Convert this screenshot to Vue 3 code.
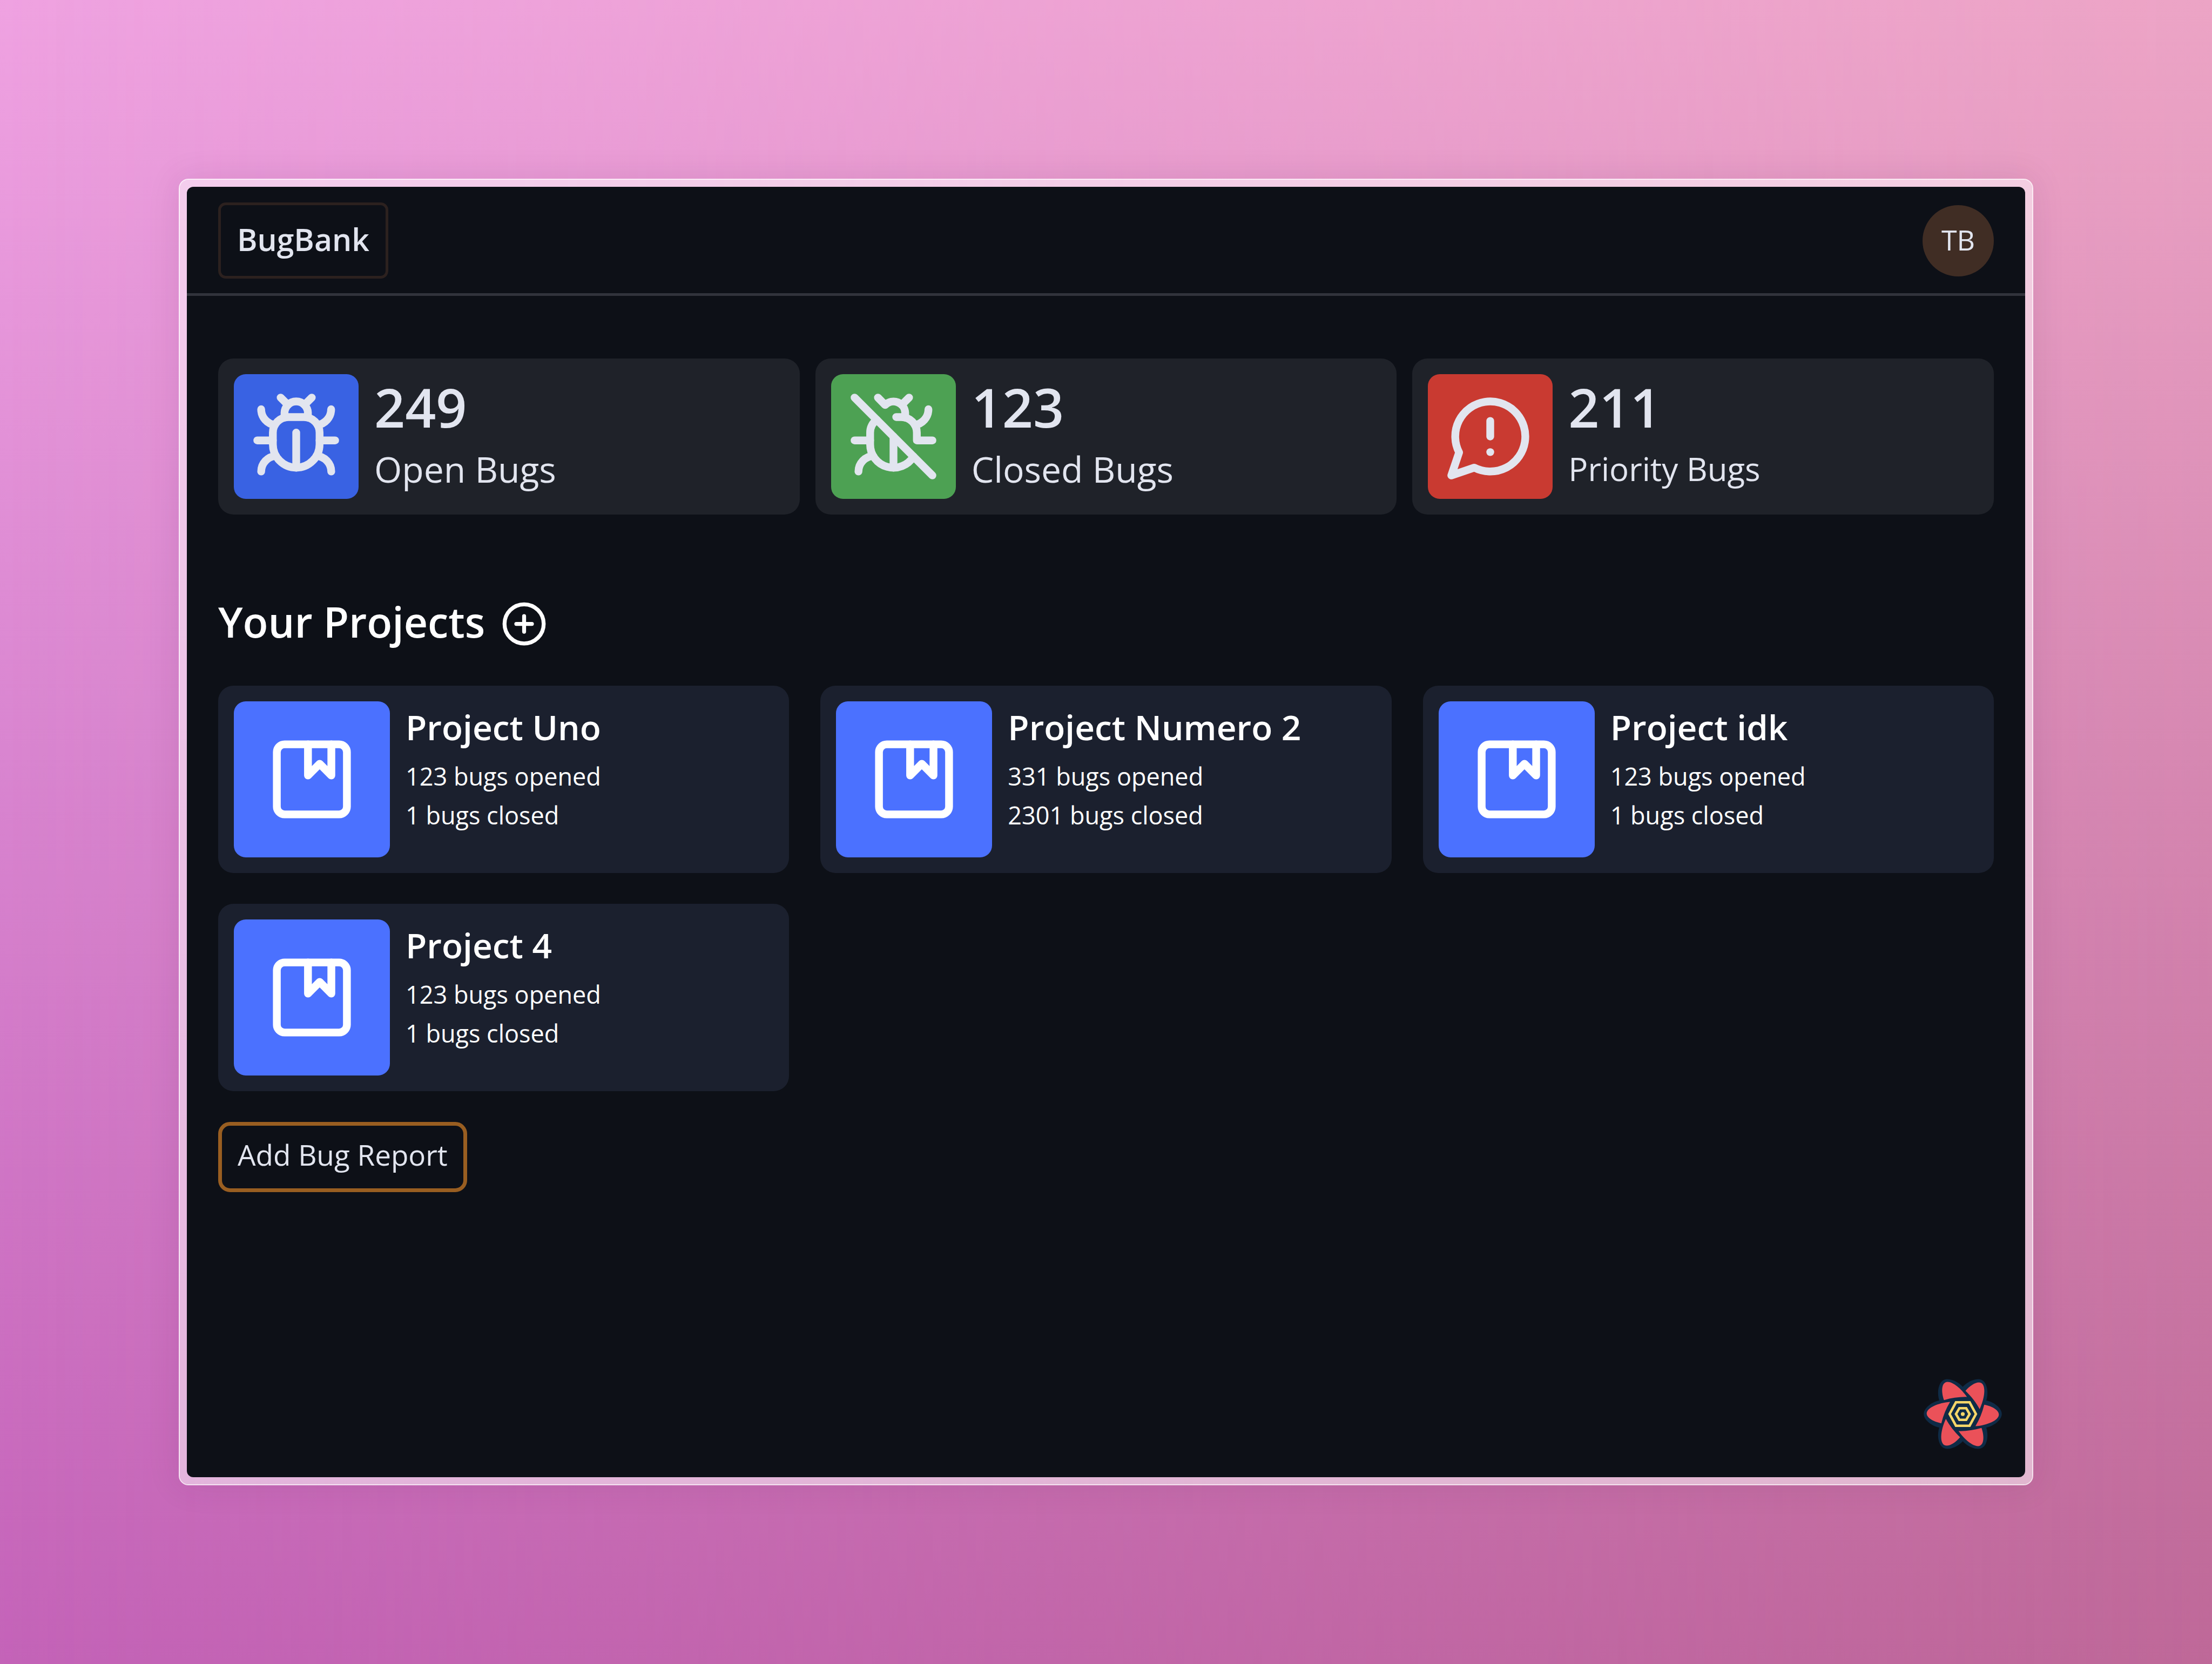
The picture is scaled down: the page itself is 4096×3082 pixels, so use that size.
<script setup>
const stats = [
  { value: '249', label: 'Open Bugs', tone: 'blue', icon: 'bug', size: 'large' },
  { value: '123', label: 'Closed Bugs', tone: 'green', icon: 'bug-off', size: 'large' },
  { value: '211', label: 'Priority Bugs', tone: 'red', icon: 'warning', size: 'small' },
]

const icons = {
  bug: [
    'm8 2 1.88 1.88',
    'M14.12 3.88 16 2',
    'M9 7.13v-1a3.003 3.003 0 1 1 6 0v1',
    'M12 20c-3.3 0-6-2.7-6-6v-3a4 4 0 0 1 4-4h4a4 4 0 0 1 4 4v3c0 3.3-2.7 6-6 6',
    'M12 20v-9',
    'M6.53 9C4.6 8.8 3 7.1 3 5',
    'M6 13H2',
    'M3 21c0-2.1 1.7-3.9 3.8-4',
    'M20.97 5c0 2.1-1.6 3.8-3.5 4',
    'M22 13h-4',
    'M17.2 17c2.1.1 3.8 1.9 3.8 4',
  ],
  'bug-off': [
    'M15 7.13V6a3 3 0 0 0-5.14-2.1L8 2',
    'M14.12 3.88 16 2',
    'M22 13h-4v-2a4 4 0 0 0-4-4h-1.3',
    'M20.97 5c0 2.1-1.6 3.8-3.5 4',
    'm2 2 20 20',
    'M7.7 7.7A4 4 0 0 0 6 11v3a6 6 0 0 0 11.13 3.13',
    'M12 20v-8',
    'M6 13H2',
    'M3 21c0-2.1 1.7-3.9 3.8-4',
  ],
  warning: ['M7.9 20A9 9 0 1 0 4 16.1L2 22Z', 'M12 8v4', 'M12 16h.01'],
}

const projects = [
  { name: 'Project Uno', opened: 123, closed: 1 },
  { name: 'Project Numero 2', opened: 331, closed: 2301 },
  { name: 'Project idk', opened: 123, closed: 1 },
  { name: 'Project 4', opened: 123, closed: 1 },
]

const petals = [0, 60, 120, 180, 240, 300]
</script>

<template>
  <div class="backdrop">
    <div class="frame">
      <div class="window">
        <header class="topbar">
          <a class="brand" href="#">BugBank</a>
          <button class="avatar" type="button" aria-label="Account">TB</button>
        </header>

        <main class="content">
          <section class="stats" aria-label="Bug totals">
            <article v-for="stat in stats" :key="stat.label" class="stat">
              <div class="stat-icon" :class="stat.tone">
                <svg class="icon" viewBox="0 0 24 24" aria-hidden="true">
                  <path v-for="d in icons[stat.icon]" :key="d" :d="d" />
                </svg>
              </div>
              <div class="stat-text">
                <p class="stat-value">{{ stat.value }}</p>
                <p class="stat-label" :class="stat.size">{{ stat.label }}</p>
              </div>
            </article>
          </section>

          <div class="heading">
            <h1>Your Projects</h1>
            <button class="add" type="button" aria-label="Add project">
              <svg viewBox="0 0 24 24" aria-hidden="true">
                <circle cx="12" cy="12" r="10" />
                <path d="M8 12h8M12 8v8" />
              </svg>
            </button>
          </div>

          <section class="projects" aria-label="Projects">
            <article v-for="project in projects" :key="project.name" class="project">
              <div class="project-icon">
                <svg class="icon" viewBox="0 0 24 24" aria-hidden="true">
                  <rect x="3" y="3" width="18" height="18" rx="2" />
                  <path d="M11 3v8l3-3 3 3V3" />
                </svg>
              </div>
              <div class="project-text">
                <h2>{{ project.name }}</h2>
                <p>{{ project.opened }} bugs opened</p>
                <p>{{ project.closed }} bugs closed</p>
              </div>
            </article>
          </section>

          <button class="report" type="button">Add Bug Report</button>
        </main>

        <button class="devtools" type="button" aria-label="Open query devtools">
          <svg viewBox="-80 -72 160 144" aria-hidden="true">
            <g class="petal-edge">
              <circle r="44" />
              <path v-for="a in petals" :key="a" :transform="`rotate(${a})`" d="M22 -27C50 -36 80 -16 80 0S50 36 22 27Z" />
            </g>
            <g class="petal">
              <path v-for="a in petals" :key="a" :transform="`rotate(${a})`" d="M44 -19C60 -16 74 -8 74 1C74 13 50 23 26 25C34 12 40 -3 44 -19Z" />
            </g>
            <path class="ring" d="M-14 -24H14L27 0L14 24H-14L-27 0Z" />
            <path class="ring" d="M-7 -12H7L14 0L7 12H-7L-14 0Z" />
            <circle class="dot" r="4" />
          </svg>
        </button>
      </div>
    </div>
  </div>
</template>

<style>
body {
  margin: 0;
}
</style>

<style scoped>
.backdrop {
  position: relative;
  box-sizing: border-box;
  display: flex;
  min-height: 100vh;
  padding: 331px;
  background: linear-gradient(180deg, #efa2e1 0%, #d985d0 45%, #c463b8 100%);
  font-family: "Open Sans", "Noto Sans", sans-serif;
  color: #e2e5ef;
}

.backdrop::before {
  content: "";
  position: absolute;
  inset: 0;
  background: linear-gradient(180deg, #eca4c5 0%, #d688b1 45%, #be6898 100%);
  mask-image: linear-gradient(90deg, transparent, #000);
}

.frame {
  position: relative;
  box-sizing: border-box;
  display: flex;
  flex: 1;
  padding: 13px;
  border: 2px solid rgba(255, 255, 255, 0.8);
  border-radius: 18px;
  background: rgba(255, 255, 255, 0.5);
  background-clip: padding-box;
  box-shadow: 0 0 60px rgba(90, 30, 90, 0.12);
}

.window {
  position: relative;
  flex: 1;
  border-radius: 12px;
  background: #0d1017;
}

.topbar {
  display: flex;
  align-items: center;
  justify-content: space-between;
  padding: 29px 58px 27px;
  border-bottom: 5px solid #31333c;
}

.brand {
  box-sizing: border-box;
  height: 141px;
  padding: 0 30px;
  border: 5px solid #2c211f;
  border-radius: 14px;
  font-size: 57px;
  font-weight: 600;
  line-height: 127px;
  color: inherit;
  text-decoration: none;
}

button {
  box-sizing: border-box;
  padding: 0;
  border: 0;
  background: none;
  font-family: inherit;
  color: inherit;
}

.avatar {
  width: 132px;
  height: 132px;
  padding-bottom: 5px;
  border-radius: 50%;
  background: #402d24;
  font-size: 52px;
  line-height: 127px;
}

.content {
  padding: 116px 58px 0;
}

.stats {
  display: grid;
  grid-template-columns: repeat(3, 1fr);
  gap: 29px;
}

.stat,
.project {
  display: flex;
  gap: 29px;
  padding: 29px;
  border-radius: 28px;
}

.stat {
  background: #1f2229;
}

.stat-icon,
.project-icon {
  display: flex;
  flex: none;
  align-items: center;
  justify-content: center;
  border-radius: 22px;
}

.stat-icon {
  width: 231px;
  height: 231px;
}

.blue {
  background: #3962e3;
}

.green {
  background: #4da153;
}

.red {
  background: #c93a31;
}

.icon {
  width: 173px;
  height: 173px;
}

svg {
  display: block;
}

.icon,
.add svg {
  fill: none;
  stroke: currentColor;
  stroke-width: 2;
  stroke-linecap: round;
  stroke-linejoin: round;
}

p,
h1,
h2 {
  margin: 0;
}

.stat-value {
  font-size: 100px;
  font-weight: 600;
  line-height: 121px;
}

.stat-label {
  line-height: 109px;
}

.large {
  font-size: 66px;
}

.small {
  font-size: 60px;
}

.heading {
  display: flex;
  align-items: center;
  gap: 29px;
  height: 144px;
  margin-top: 130px;
  color: #fff;
}

h1 {
  padding-bottom: 6px;
  font-size: 77px;
  font-weight: 600;
  line-height: 138px;
}

.add,
.add svg {
  width: 87px;
  height: 87px;
}

.projects {
  display: grid;
  grid-template-columns: repeat(3, 1fr);
  gap: 57px 58px;
  margin-top: 43px;
  color: #fff;
}

.project {
  background: #1b202e;
}

.project-icon {
  width: 289px;
  height: 289px;
  background: #4b71ff;
}

h2 {
  margin-bottom: 8px;
  font-size: 64px;
  font-weight: 600;
  line-height: 95px;
}

.project-text p {
  font-size: 45px;
  font-weight: 500;
  line-height: 72px;
}

.report {
  height: 130px;
  margin-top: 57px;
  padding: 0 29px 9px;
  border: 7px solid #995e21;
  border-radius: 22px;
  font-size: 53px;
  line-height: 107px;
}

.devtools {
  position: absolute;
  right: 43px;
  bottom: 52px;
}

.devtools svg {
  width: 145px;
  height: 130px;
}

.petal-edge {
  fill: #0f2b46;
}

.petal {
  fill: #eb5159;
}

.ring {
  fill: none;
  stroke: #f5d769;
  stroke-width: 5;
}

.dot {
  fill: #f5d769;
}
</style>
